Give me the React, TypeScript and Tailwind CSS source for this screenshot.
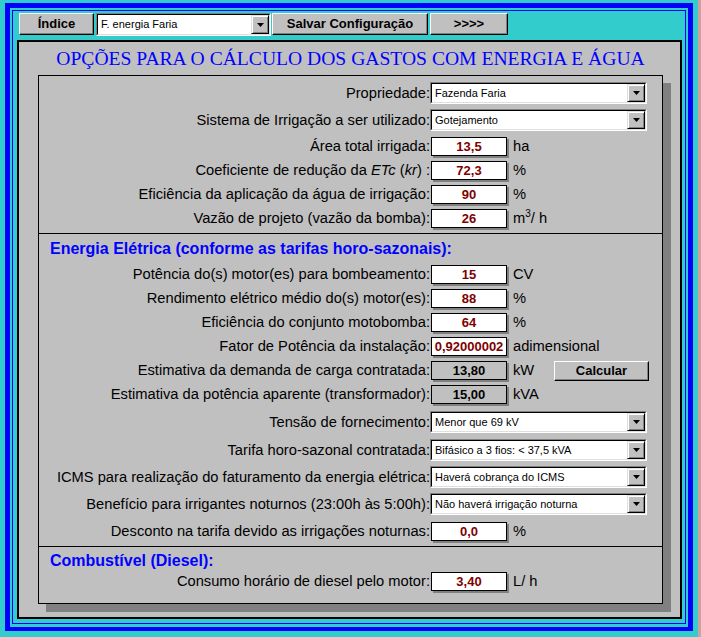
import React from 'react';

const SANS = "font-['Liberation_Sans',Arial,sans-serif]";
const LABEL = 'w-[391px] shrink-0 text-right text-[14.7px] leading-[17px] text-black whitespace-nowrap';
const UNIT = 'ml-[6px] text-[14.7px] leading-[17px] text-black whitespace-nowrap';

const Arrow = () => (
  <div className="w-[18px] h-full shrink-0 bg-[#C0C0C0] border border-t-[#dfdfdf] border-l-[#dfdfdf] border-b-black border-r-black shadow-[inset_1px_1px_0_#ffffff,inset_-1px_-1px_0_#808080] flex items-center justify-center">
    <svg width="7" height="4" viewBox="0 0 7 4">
      <polygon points="0,0 7,0 3.5,4" fill="#000" />
    </svg>
  </div>
);

const Select: React.FC<{ value: string; className?: string }> = ({ value, className = 'w-[217px] h-[22px]' }) => (
  <div className={`${className} shrink-0 bg-white border border-t-[#808080] border-l-[#808080] border-b-white border-r-white`}>
    <div className="h-full flex items-stretch border border-t-black border-l-black border-b-[#dfdfdf] border-r-[#dfdfdf]">
      <div className="flex-1 flex items-center pl-[3px] text-[11px] text-black whitespace-nowrap overflow-hidden">{value}</div>
      <Arrow />
    </div>
  </div>
);

const Field: React.FC<{ value: string; gray?: boolean }> = ({ value, gray }) => (
  <div
    className={`ml-[1px] w-[76px] h-[19px] shrink-0 border border-black shadow-[2px_2px_0_#808080] flex items-center justify-center font-bold text-[13px] leading-[17px] ${
      gray ? 'bg-[#C0C0C0] text-black' : 'bg-white text-[#800000]'
    }`}
  >
    {value}
  </div>
);

const RaisedButton: React.FC<{ children: React.ReactNode; className: string }> = ({ children, className }) => (
  <div
    className={`${className} shrink-0 bg-[#C0C0C0] border border-t-white border-l-white border-b-black border-r-black shadow-[inset_-1px_-1px_0_#808080] flex items-center justify-center font-bold text-[13px] text-black`}
  >
    {children}
  </div>
);

const SelectRow: React.FC<{ label: React.ReactNode; value: string; className: string }> = ({ label, value, className }) => (
  <div className={`flex items-center h-[22px] ${className}`}>
    <div className={LABEL}>{label}</div>
    <Select value={value} />
  </div>
);

const FieldRow: React.FC<{
  label: React.ReactNode;
  value: string;
  unit?: React.ReactNode;
  gray?: boolean;
  className?: string;
  extra?: React.ReactNode;
}> = ({ label, value, unit, gray, className = '', extra }) => (
  <div className={`flex items-center h-[19px] ${className}`}>
    <div className={LABEL}>{label}</div>
    <Field value={value} gray={gray} />
    <div className={`${UNIT} ${extra ? 'w-[41px]' : ''}`}>{unit}</div>
    {extra}
  </div>
);

const Header: React.FC<{ children: React.ReactNode }> = ({ children }) => (
  <div className="pl-[11px] h-[18px] text-[16px] leading-[18px] font-bold text-[#0000FF] whitespace-nowrap">{children}</div>
);

export default function App() {
  return (
    <div className={`w-[701px] h-[637px] flex bg-[#33CCCC] overflow-hidden ${SANS}`}>
      <div className="w-[698px] h-full pl-[5px] pt-[3px]">
        {/* outer blue frame */}
        <div className="w-[688px] h-[628px] border-[5px] border-b-[4px] border-[#0000FF] pt-[2px] pl-[2px] pr-[2px] pb-[3px]">
          <div className="h-full border border-[#0000FF] pt-[2px] pl-[4px] pr-[3px] pb-[4px] flex flex-col">
            {/* toolbar */}
            <div className="h-[23px] flex items-start pl-[2px]">
              <RaisedButton className="w-[75px] h-[22px]">Índice</RaisedButton>
              <div className="ml-[2px]">
                <Select value="F. energia Faria" className="w-[175px] h-[23px]" />
              </div>
              <RaisedButton className="ml-[1px] w-[156px] h-[22px]">Salvar Configuração</RaisedButton>
              <RaisedButton className="ml-[2px] w-[78px] h-[22px]">&gt;&gt;&gt;&gt;</RaisedButton>
            </div>

            {/* main panel */}
            <div className="mt-[4px] flex-1 border-2 border-black bg-[#C0C0C0] pt-[6px] pl-[19px] pr-[17px]">
              <div className="h-[22px] text-center text-[19.6px] leading-[22px] text-[#0000FF] font-['Liberation_Serif','Times_New_Roman',serif] whitespace-nowrap">
                OPÇÕES PARA O CÁLCULO DOS GASTOS COM ENERGIA E ÁGUA
              </div>

              <div className="mt-[5px] w-[625px] border border-black shadow-[8px_8px_0_#808080]">
                {/* section 1 */}
                <div className="pt-[6px] pb-[5px]">
                  <SelectRow label="Propriedade:" value="Fazenda Faria" className="" />
                  <SelectRow label="Sistema de Irrigação a ser utilizado:" value="Gotejamento" className="mt-[5px]" />
                  <FieldRow className="mt-[6px]" label="Área total irrigada:" value="13,5" unit="ha" />
                  <FieldRow
                    className="mt-[5px]"
                    label={
                      <>
                        Coeficiente de redução da <i>ETc</i> (<i>kr</i>) :
                      </>
                    }
                    value="72,3"
                    unit="%"
                  />
                  <FieldRow className="mt-[5px]" label="Eficiência da aplicação da água de irrigação:" value="90" unit="%" />
                  <FieldRow
                    className="mt-[5px]"
                    label="Vazão de projeto (vazão da bomba):"
                    value="26"
                    unit={
                      <>
                        m<span className="text-[10px] relative -top-[6px]">3</span>/ h
                      </>
                    }
                  />
                </div>

                {/* section 2 */}
                <div className="border-t border-black pt-[6px] pb-[5px]">
                  <Header>Energia Elétrica (conforme as tarifas horo-sazonais):</Header>
                  <FieldRow className="mt-[7px]" label="Potência do(s) motor(es) para bombeamento:" value="15" unit="CV" />
                  <FieldRow className="mt-[5px]" label="Rendimento elétrico médio do(s) motor(es):" value="88" unit="%" />
                  <FieldRow className="mt-[5px]" label="Eficiência do conjunto motobomba:" value="64" unit="%" />
                  <FieldRow className="mt-[5px]" label="Fator de Potência da instalação:" value="0,92000002" unit="adimensional" />
                  <FieldRow
                    className="mt-[5px]"
                    label="Estimativa da demanda de carga contratada:"
                    value="13,80"
                    gray
                    unit="kW"
                    extra={<RaisedButton className="w-[95px] h-[20px] self-start text-[13.5px]">Calcular</RaisedButton>}
                  />
                  <FieldRow className="mt-[5px]" label="Estimativa da potência aparente (transformador):" value="15,00" gray unit="kVA" />
                  <SelectRow className="mt-[7px]" label="Tensão de fornecimento:" value="Menor que 69 kV" />
                  <SelectRow className="mt-[6px]" label="Tarifa horo-sazonal contratada:" value="Bifásico a 3 fios: < 37,5 kVA" />
                  <SelectRow className="mt-[5px]" label="ICMS para realização do faturamento da energia elétrica:" value="Haverá cobrança do ICMS" />
                  <SelectRow className="mt-[5px]" label="Benefício para irrigantes noturnos (23:00h às 5:00h):" value="Não haverá irrigação noturna" />
                  <FieldRow className="mt-[7px]" label="Desconto na tarifa devido as irrigações noturnas:" value="0,0" unit="%" />
                </div>

                {/* section 3 */}
                <div className="border-t border-black pt-[5px] pb-[12px]">
                  <Header>Combustível (Diesel):</Header>
                  <FieldRow className="mt-[2px]" label="Consumo horário de diesel pelo motor:" value="3,40" unit="L/ h" />
                </div>
              </div>
            </div>
          </div>
        </div>
      </div>
      <div className="w-[3px] h-full bg-[#D0A0A0]" />
    </div>
  );
}
